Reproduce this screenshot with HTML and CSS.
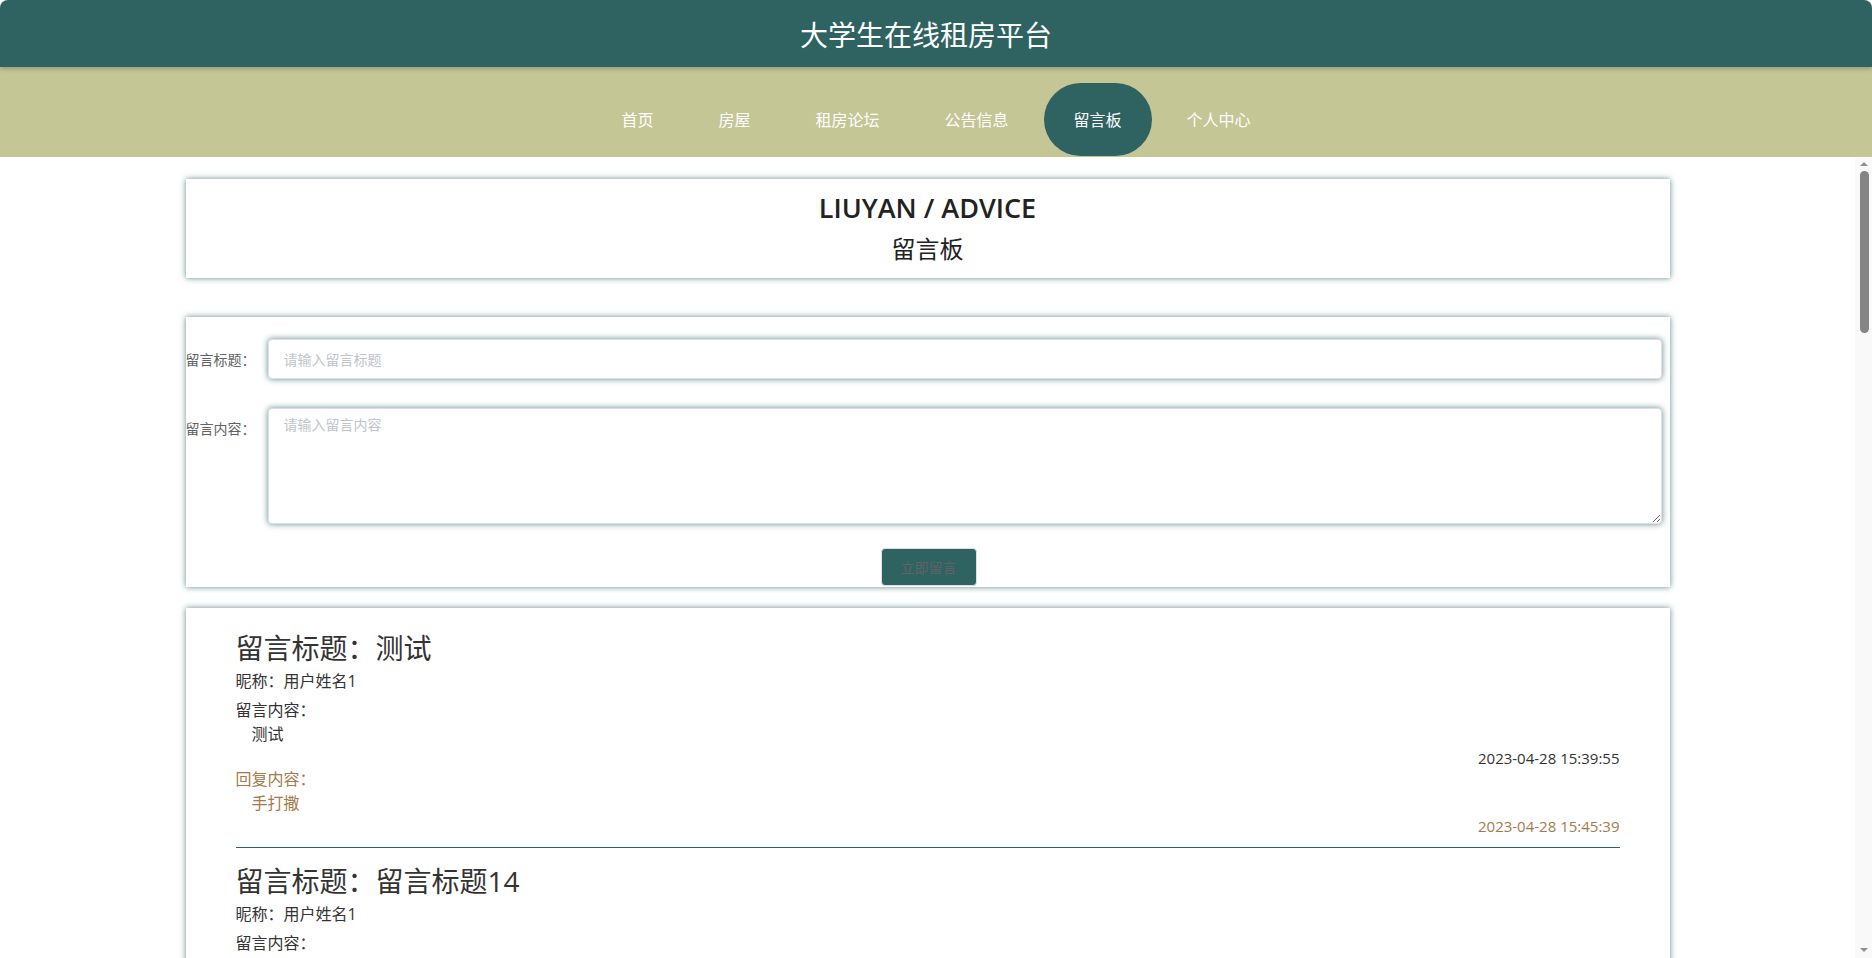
FILE: index.html
```html
<!DOCTYPE html>
<html lang="zh-CN">
<head>
<meta charset="utf-8">
<title>留言板 - 大学生在线租房平台</title>
<link rel="stylesheet" href="styles.css">
</head>
<body>
<div class="app">
  <header class="topbar"><h1 class="site-title">大学生在线租房平台</h1></header>
  <nav class="menu">
    <a class="menu-item">首页</a>
    <a class="menu-item">房屋</a>
    <a class="menu-item">租房论坛</a>
    <a class="menu-item">公告信息</a>
    <a class="menu-item active">留言板</a>
    <a class="menu-item">个人中心</a>
  </nav>
  <div class="content-row">
    <main class="main">
      <section class="card banner">
        <div class="banner-en">LIUYAN / ADVICE</div>
        <div class="banner-cn">留言板</div>
      </section>

      <section class="card form-card">
        <form class="form">
          <div class="form-row">
            <label class="form-label">留言标题：</label>
            <div class="form-control"><input class="field" type="text" placeholder="请输入留言标题"></div>
          </div>
          <div class="form-row">
            <label class="form-label">留言内容：</label>
            <div class="form-control"><textarea class="field area" placeholder="请输入留言内容"></textarea></div>
          </div>
          <div class="form-actions"><button type="button" class="submit">立即留言</button></div>
        </form>
      </section>

      <section class="card list-card">
        <article class="msg">
          <h2 class="msg-title">留言标题：测试</h2>
          <p class="msg-nick">昵称：用户姓名1</p>
          <p class="msg-label">留言内容：</p>
          <p class="msg-text">测试</p>
          <p class="msg-time">2023-04-28 15:39:55</p>
          <div class="reply">
            <p class="msg-label">回复内容：</p>
            <p class="msg-text">手打撒</p>
            <p class="msg-time">2023-04-28 15:45:39</p>
          </div>
        </article>
        <article class="msg">
          <h2 class="msg-title">留言标题：留言标题14</h2>
          <p class="msg-nick">昵称：用户姓名1</p>
          <p class="msg-label">留言内容：</p>
          <p class="msg-text">留言内容14</p>
          <p class="msg-time">2023-04-28 15:30:14</p>
          <div class="reply">
            <p class="msg-label">回复内容：</p>
            <p class="msg-text">回复内容14</p>
            <p class="msg-time">2023-04-28 15:30:14</p>
          </div>
        </article>
        <article class="msg">
          <h2 class="msg-title">留言标题：留言标题13</h2>
          <p class="msg-nick">昵称：用户姓名1</p>
          <p class="msg-label">留言内容：</p>
          <p class="msg-text">留言内容13</p>
          <p class="msg-time">2023-04-28 15:30:13</p>
        </article>
        <article class="msg">
          <h2 class="msg-title">留言标题：留言标题12</h2>
          <p class="msg-nick">昵称：用户姓名1</p>
          <p class="msg-label">留言内容：</p>
          <p class="msg-text">留言内容12</p>
          <p class="msg-time">2023-04-28 15:30:12</p>
        </article>
      </section>
    </main>
    <div class="vscroll" aria-hidden="true">
      <span class="vs-arrow vs-up"></span>
      <span class="vs-thumb"></span>
      <span class="vs-fill"></span>
      <span class="vs-arrow vs-down"></span>
    </div>
  </div>
</div>
</body>
</html>
```

FILE: styles.css
```css
* { box-sizing: border-box; }

html, body {
  margin: 0;
  height: 100%;
}

body {
  font-family: "Open Sans", "Noto Sans CJK SC", sans-serif;
  color: #333;
  background: #fff;
  overflow: hidden;
}

.app {
  height: 100vh;
  display: flex;
  flex-direction: column;
}

/* ---------- header ---------- */
.topbar {
  flex-shrink: 0;
  height: 67px;
  background: #2e6362;
  border-radius: 8px 8px 0 0;
  display: flex;
  align-items: center;
  justify-content: center;
  padding-right: 20px;
  box-shadow: 0 2px 4px rgba(0, 0, 0, 0.22);
  position: relative;
  z-index: 2;
}

.site-title {
  margin: 0;
  font-family: "Noto Sans CJK SC", sans-serif;
  font-size: 28px;
  font-weight: 400;
  line-height: 1;
  color: #fff;
}

/* ---------- menu ---------- */
.menu {
  flex-shrink: 0;
  height: 90px;
  background: #c4c695;
  display: flex;
  justify-content: center;
  align-items: flex-end;
  gap: 5px;
  padding-bottom: 1px;
}

.menu-item {
  height: 73px;
  line-height: 73px;
  padding: 0 30px;
  font-family: "Noto Sans CJK SC", sans-serif;
  font-size: 16px;
  color: #fff;
  border-radius: 40px;
  cursor: pointer;
}

.menu-item.active {
  background: #2e6362;
}

/* ---------- scrolling area ---------- */
.content-row {
  flex: 1;
  min-height: 0;
  display: flex;
}

.main {
  flex: 1;
  min-width: 0;
  overflow-y: auto;
  scrollbar-width: none;
  padding: 22px 0 50px;
}

.vscroll {
  flex-shrink: 0;
  width: 17px;
  background: #f9f9f9;
  display: flex;
  flex-direction: column;
  align-items: center;
}

.vs-arrow {
  width: 0;
  height: 0;
  border-left: 4px solid transparent;
  border-right: 4px solid transparent;
  margin-left: 1px;
}

.vs-up {
  margin-top: 5px;
  border-bottom: 4px solid #8f8f8f;
}

.vs-down {
  margin-bottom: 6px;
  border-top: 4px solid #8f8f8f;
}

.vs-thumb {
  width: 9px;
  height: 162px;
  margin-top: 5px;
  margin-left: 2px;
  border-radius: 5px;
  background: #858585;
}

.vs-fill {
  flex: 1;
}

/* ---------- cards ---------- */
.card {
  width: 80%;
  margin: 0 auto;
  background: #fff;
  box-shadow: 0 0 6px rgba(46, 99, 98, 0.75);
}

.banner {
  padding: 10px 0;
  text-align: center;
  color: #222;
}

.banner-en {
  font-size: 27px;
  font-weight: 600;
  line-height: 38px;
}

.banner-cn {
  font-family: "Noto Sans CJK SC", sans-serif;
  font-size: 24px;
  line-height: 41px;
}

/* ---------- form ---------- */
.form-card {
  margin-top: 39px;
  padding: 22px 0 1px;
}

.form-row {
  display: flex;
  align-items: flex-start;
  padding-right: 8px;
}

.form-row + .form-row {
  margin-top: 29px;
}

.form-label {
  width: 82px;
  flex-shrink: 0;
  padding-right: 12px;
  text-align: right;
  white-space: nowrap;
  font-family: "Noto Sans CJK SC", sans-serif;
  font-size: 14px;
  line-height: 40px;
  color: #606266;
}

.form-control {
  flex: 1;
}

.field {
  display: block;
  width: 100%;
  height: 40px;
  padding: 0 15px;
  border: 1px solid #dcdfe6;
  border-radius: 4px;
  background: #fff;
  font-family: "Noto Sans CJK SC", sans-serif;
  font-size: 14px;
  color: #606266;
  box-shadow: 0 0 6px rgba(46, 99, 98, 0.75);
  outline: none;
}

.field::placeholder {
  color: #c0c4cc;
}

.area {
  height: 116px;
  padding: 5px 15px;
  line-height: 1.5;
  resize: vertical;
}

.form-actions {
  margin-top: 24px;
  padding-left: 2px;
  text-align: center;
}

.submit {
  height: 38px;
  padding: 0 19px;
  background: #2e6362;
  border: 1px solid #dcdfe6;
  border-radius: 4px;
  color: #606266;
  font-family: "Noto Sans CJK SC", sans-serif;
  font-size: 14px;
  cursor: pointer;
}

/* ---------- message list ---------- */
.list-card {
  margin-top: 21px;
  padding: 20px 50px 40px;
}

.msg p {
  margin: 0;
}

.msg + .msg {
  margin-top: 10px;
  border-top: 1px solid #2e6362;
  padding-top: 13px;
}

.msg-title {
  margin: 0;
  font-size: 28px;
  font-weight: 400;
  line-height: 40px;
  color: #333;
}

.msg-nick {
  margin-top: 1px !important;
  font-size: 16px;
  line-height: 24px;
}

.msg-label {
  margin-top: 5px !important;
  font-size: 16px;
  line-height: 24px;
}

.msg-text {
  padding-left: 16px;
  font-size: 16px;
  line-height: 24px;
}

.msg-time {
  margin-top: 1px !important;
  text-align: right;
  font-size: 15px;
  line-height: 22px;
}

.reply {
  color: #a47a4b;
}

.reply .msg-label {
  margin-top: 0 !important;
  line-height: 20px;
}

.reply .msg-text {
  margin-top: 2px !important;
}

.reply .msg-time {
  margin-top: 0 !important;
}
```
